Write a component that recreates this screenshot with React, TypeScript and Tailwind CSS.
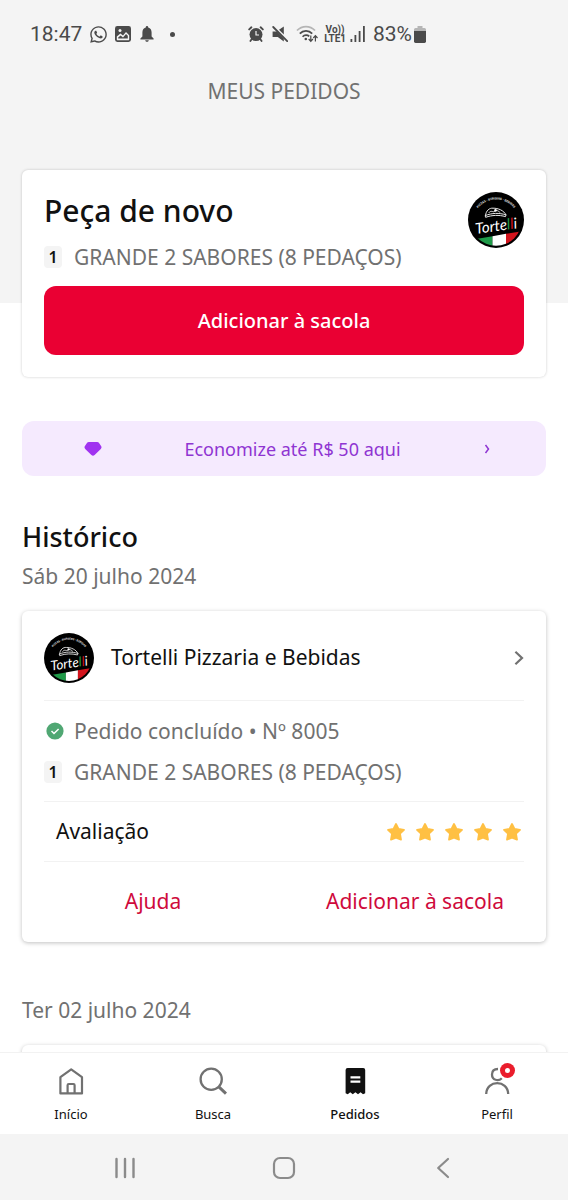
import React from "react";
import { FaWhatsapp } from "react-icons/fa";

function StoreLogo({ className, id }: { className: string; id: string }) {
  return (
    <svg viewBox="0 0 56 56" className={className} role="img" aria-label="Tortelli">
      <defs>
        <clipPath id={`${id}-clip`}>
          <circle cx="28" cy="28" r="25.8" />
        </clipPath>
        <path id={`${id}-arc`} d="M7.5 20 A 23 23 0 0 1 48.5 20" />
      </defs>
      <circle cx="28" cy="28" r="28" fill="#000" />
      <g clipPath={`url(#${id}-clip)`}>
        <path d="M0 48.4 L24.5 44.2 V56 H0 Z" fill="#1f9a48" />
        <path d="M24.5 44.2 L38 41.8 V56 H24.5 Z" fill="#fff" />
        <path d="M38 41.8 L56 38.8 V56 H38 Z" fill="#d3141d" />
      </g>
      <text fill="#e0e0e0" fontSize="3" fontWeight="700" fontFamily="Roboto, sans-serif" textAnchor="middle">
        <textPath href={`#${id}-arc`} startOffset="50%">
          PIZZAS - BURGERS - BEBIDAS
        </textPath>
      </text>
      <path
        d="M17.5 23.5 C18 18.5 21.5 15.8 25 16.2 C30 16 36 18.5 38 22.8 M17.5 23.5 C24 20.8 31 20.8 38 22.8 L37.5 24.6 C31 22.8 24 23 18 25.2 Z M21 20.5 C23 17.8 25 20.5 26.5 19.5 C28 17 31 19.5 32 20.4"
        fill="none"
        stroke="#e6e6e6"
        strokeWidth="1"
        strokeLinecap="round"
        strokeLinejoin="round"
      />
      <circle cx="27.5" cy="18.4" r="1.3" fill="#fff" />
      <text
        x="8"
        y="42"
        transform="rotate(-8 8 42)"
        fontFamily="Lato, sans-serif"
        fontStyle="italic"
        fontSize="15"
        fill="#fff"
      >
        Torte<tspan fill="#1f9a48">l</tspan><tspan fill="#d3141d">l</tspan>i
      </text>
    </svg>
  );
}

function AlarmIcon() {
  return (
    <svg viewBox="0 0 16 16" className="size-4" aria-hidden="true">
      <circle cx="8" cy="8.6" r="6.5" fill="#4a4a4a" />
      <path d="M1.2 3.4 L3.4 1.3 M14.8 3.4 L12.6 1.3" stroke="#4a4a4a" strokeWidth="1.9" strokeLinecap="round" />
      <path d="M3.8 13 L2.4 15 M12.2 13 L13.6 15" stroke="#4a4a4a" strokeWidth="1.8" strokeLinecap="round" />
      <path d="M8 5 V9 H11" stroke="#f4f4f4" strokeWidth="1.2" fill="none" />
    </svg>
  );
}

function MuteIcon() {
  return (
    <svg viewBox="0 0 16 16" className="size-4" aria-hidden="true">
      <path d="M.6 5.4 H5 L11.8 12.4 V15.4 L5.8 11 H.6 Z" fill="#4a4a4a" />
      <path d="M7 3.8 L11.8 .4 V8.4 Z" fill="#4a4a4a" />
      <path d="M1.2 1 L15.2 15.2" stroke="#4a4a4a" strokeWidth="1.8" strokeLinecap="round" />
    </svg>
  );
}

function WifiIcon() {
  return (
    <svg viewBox="0 0 22 18" className="h-[18px] w-[22px]" fill="none" aria-hidden="true">
      <path d="M1 5.5 C6 .2 14 .2 19 5.5" stroke="#b5b5b5" strokeWidth="1.8" />
      <path d="M3.8 8.7 C7.2 5 12.8 5 16.2 8.7" stroke="#4a4a4a" strokeWidth="1.7" />
      <path d="M6.6 11.8 C8.5 9.7 11.5 9.7 13.2 11.4" stroke="#4a4a4a" strokeWidth="1.7" />
      <circle cx="9.8" cy="14" r="1.3" fill="#4a4a4a" />
      <path d="M14.8 10.5 V16 M12.7 14 L14.8 16.4 L16.9 14 M19.4 16.5 V11 M17.3 13 L19.4 10.6 L21.5 13" stroke="#4a4a4a" strokeWidth="1.2" />
    </svg>
  );
}

function StatusBar() {
  return (
    <div className="flex h-[69px] items-center justify-between pl-[30px] pr-[142px] font-[Roboto,sans-serif] text-xl text-[#4a4a4a]">
      <div className="flex items-center">
        <span className="text-[21px]">18:47</span>
        <FaWhatsapp className="ml-[7px] size-[19px]" aria-hidden="true" />
        <svg viewBox="0 0 16 16" className="ml-[7px] size-4" aria-hidden="true">
          <rect width="16" height="16" rx="2.4" fill="#4a4a4a" />
          <path d="M1.8 13.6 V10.6 L5.4 7.4 L8 9.6 L11 6 L14.2 9.2 V13.6 Q14.2 14.2 13.6 14.2 H2.4 Q1.8 14.2 1.8 13.6 Z" fill="#f4f4f4" />
          <path d="M3.2 12.4 V11.4 L5.6 9.4 L8 11.4 L11 8 L12.8 9.8 V12.4 Z" fill="#4a4a4a" />
          <circle cx="5" cy="4.4" r="1.5" fill="#f4f4f4" />
        </svg>
        <svg viewBox="0 0 14 16" className="ml-[9px] h-4 w-3.5" fill="#4a4a4a" aria-hidden="true">
          <path d="M7 0 C7.8 0 8.2 .6 8.2 1.4 C10.6 2 11.6 4 11.6 6.4 V10.4 L13.6 12.4 V13.4 H.4 V12.4 L2.4 10.4 V6.4 C2.4 4 3.4 2 5.8 1.4 C5.8 .6 6.2 0 7 0 Z M5.2 14.2 H8.8 C8.4 16.2 5.6 16.2 5.2 14.2 Z" />
        </svg>
        <span className="ml-4 size-[5px] rounded-full bg-[#4a4a4a]" />
      </div>
      <div className="flex items-center">
        <AlarmIcon />
        <span className="ml-2 flex">
          <MuteIcon />
        </span>
        <span className="ml-2 flex">
          <WifiIcon />
        </span>
        <span className="ml-1.5 flex flex-col items-center text-[10px] font-bold leading-[9px]">
          <span>Vo))</span>
          <span>LTE1</span>
        </span>
        <svg viewBox="0 0 16 16" className="ml-1 size-4" fill="#4a4a4a" aria-hidden="true">
          <path d="M.5 13 H2.3 V16 H.5 Z M4.5 9 H6.3 V16 H4.5 Z M8.7 5 H10.5 V16 H8.7 Z M13 0 H14.8 V16 H13 Z" />
        </svg>
        <span className="ml-[7px] text-[21px]">83%</span>
        <svg viewBox="0 0 12 17" className="ml-0.5 h-[17px] w-3" aria-hidden="true">
          <path d="M3.5 0 H8.5 V2 H10.5 Q12 2 12 3.5 V6 H0 V3.5 Q0 2 1.5 2 H3.5 Z" fill="#b5b5b5" />
          <path d="M0 5 H12 V15.2 Q12 17 10.5 17 H1.5 Q0 17 0 15.2 Z" fill="#4a4a4a" />
        </svg>
      </div>
    </div>
  );
}

function OrderItem() {
  return (
    <p className="flex items-center gap-3 text-[21px] leading-7 text-[#717171]">
      <span className="flex h-[22px] w-[18px] items-center justify-center rounded bg-[#f4f4f4] text-base font-semibold text-[#111]">
        1
      </span>
      GRANDE 2 SABORES (8 PEDAÇOS)
    </p>
  );
}

function Star() {
  return (
    <svg viewBox="0 0 20 20" className="size-5" aria-hidden="true">
      <path
        d="M10 2 L12.5 7 L18 7.8 L14 11.7 L15 17.6 L10 15.6 L5 17.6 L6 11.7 L2 7.8 L7.5 7 Z"
        fill="#ffc043"
        stroke="#ffc043"
        strokeWidth="1.8"
        strokeLinejoin="round"
      />
    </svg>
  );
}

const tabs = [
  {
    label: "Início",
    icon: (
      <svg viewBox="0 0 28 28" className="size-7" fill="none" stroke="#717171" strokeWidth="2.2" strokeLinejoin="round" aria-hidden="true">
        <path d="M3.4 10.2 L14.2 2.4 L25 10.2 V26.4 H3.4 Z M10.6 26 V18.2 Q10.6 17 11.8 17 H16.4 Q17.6 17 17.6 18.2 V26" />
      </svg>
    ),
  },
  {
    label: "Busca",
    icon: (
      <svg viewBox="0 0 28 28" className="size-7" fill="none" stroke="#717171" strokeWidth="2.3" aria-hidden="true">
        <circle cx="12.2" cy="12.2" r="10.6" />
        <path d="M19.6 19.6 L27 26.6" strokeWidth="3" />
      </svg>
    ),
  },
  {
    label: "Pedidos",
    active: true,
    icon: (
      <svg viewBox="0 0 28 28" className="size-7" aria-hidden="true">
        <path d="M6.6 1 H22.2 Q24.2 1 24.2 3 V26.2 L22 27.3 L19.6 25.3 L17 27.3 L14.4 25.3 L11.8 27.3 L9.2 25.3 L6.8 27.3 L4.6 26.2 V3 Q4.6 1 6.6 1 Z" fill="#111" />
        <path d="M9.5 10.3 H19.3 M9.5 14.6 H19.3" stroke="#fff" strokeWidth="2.2" />
      </svg>
    ),
  },
  {
    label: "Perfil",
    badge: true,
    icon: (
      <svg viewBox="0 0 28 28" className="size-7" fill="none" stroke="#717171" strokeWidth="2.3" aria-hidden="true">
        <path d="M15 2 C10.5 2 9 4.5 9 7.4 C9 13.2 15.4 14.6 18.8 11.2 M3.2 27 C3.6 12.6 24.8 12.6 25.2 27" />
      </svg>
    ),
  },
];

export default function App() {
  return (
    <div className="flex h-screen flex-col bg-white font-['Noto_Sans',sans-serif] text-[#111]">
      <div className="min-h-0 flex-1 overflow-y-auto [scrollbar-width:none]">
        <header className="h-[303px] bg-[#f4f4f4]">
          <StatusBar />
          <h1 className="pt-2 text-center text-[21px] leading-7 text-[#717171]">MEUS PEDIDOS</h1>
        </header>

        <main className="-mt-[133px] px-[22px]">
          <section className="rounded-md bg-white p-[22px] shadow-[0_0_3px_rgba(0,0,0,0.2)]">
            <div className="flex items-start justify-between">
              <div>
                <h2 className="text-[30px] font-medium leading-[38px]">Peça de novo</h2>
                <div className="mt-[13px]">
                  <OrderItem />
                </div>
              </div>
              <StoreLogo id="again" className="size-14" />
            </div>
            <button type="button" className="mt-[15px] h-[69px] w-full rounded-xl bg-[#ea0033] text-xl font-medium text-white">
              Adicionar à sacola
            </button>
          </section>

          <a href="#economize" className="mt-11 flex h-[55px] items-center justify-between rounded-xl bg-[#f5eafe] pl-[62px] pr-[55px] text-lg text-[#8f35d2]">
            <svg viewBox="0 0 18 14" className="h-3.5 w-[18px]" aria-hidden="true">
              <path d="M5 0 H13 Q14.5 0 15.4 1.4 L17.2 4.2 Q18 5.6 16.8 7 L10.6 13 Q9 14.4 7.4 13 L1.2 7 Q0 5.6 .8 4.2 L2.6 1.4 Q3.5 0 5 0 Z" fill="#a033f0" />
            </svg>
            Economize até R$ 50 aqui
            <svg viewBox="0 0 8 10" className="h-2.5 w-2" fill="none" stroke="#8f35d2" strokeWidth="1.5" aria-hidden="true">
              <path d="M2.5 1 L5.5 5 L2.5 9" />
            </svg>
          </a>

          <h2 className="mt-[43px] text-[27px] font-medium leading-9">Histórico</h2>
          <p className="mt-[7px] text-[21px] leading-7 text-[#717171]">Sáb 20 julho 2024</p>

          <article className="mt-[21px] rounded-md bg-white px-[22px] shadow-[0_1px_4px_rgba(0,0,0,0.25)]">
            <a href="#tortelli" className="flex h-[90px] items-center border-b border-[#f2f2f2] pt-1">
              <StoreLogo id="history" className="size-[50px]" />
              <h3 className="ml-[17px] flex-1 text-[21px]">Tortelli Pizzaria e Bebidas</h3>
              <svg viewBox="0 0 10 16" className="h-4 w-2.5" fill="none" stroke="#717171" strokeWidth="2.2" aria-hidden="true">
                <path d="M1.4 1.8 L8 8 L1.4 14.2" />
              </svg>
            </a>
            <div className="flex h-[101px] flex-col gap-[13px] border-b border-[#f2f2f2] pt-4">
              <p className="flex items-center text-[21px] leading-7 text-[#717171]">
                <svg viewBox="0 0 18 18" className="ml-0.5 mr-2.5 size-[18px]" aria-hidden="true">
                  <circle cx="9" cy="9" r="8.6" fill="#50a773" />
                  <path d="M5.5 9 L8 11.5 L12.6 7" fill="none" stroke="#fff" strokeWidth="1.5" />
                </svg>
                Pedido concluído • Nº 8005
              </p>
              <OrderItem />
            </div>
            <div className="flex h-[60px] items-center justify-between border-b border-[#f2f2f2] pl-3 pr-0.5">
              <span className="text-[21px]">Avaliação</span>
              <span className="flex gap-[9px]" role="img" aria-label="5 estrelas">
                <Star />
                <Star />
                <Star />
                <Star />
                <Star />
              </span>
            </div>
            <div className="-mx-[22px] grid h-20 grid-cols-2 text-[21px] text-[#cf0a3c]">
              <button type="button">Ajuda</button>
              <button type="button">Adicionar à sacola</button>
            </div>
          </article>

          <p className="mt-[54px] text-[21px] leading-7 text-[#717171]">Ter 02 julho 2024</p>
          <article className="mt-[21px] h-24 rounded-md bg-white shadow-[0_1px_4px_rgba(0,0,0,0.25)]" />
        </main>
      </div>

      <nav className="z-10 grid h-[82px] shrink-0 grid-cols-4 border-t border-[#f2f2f2] bg-white">
        {tabs.map((tab) => (
          <a key={tab.label} href={`#${tab.label}`} className="flex flex-col items-center pt-3.5">
            <span className="relative">
              {tab.icon}
              {tab.badge && (
                <span className="absolute -right-1 -top-1 flex size-[15px] items-center justify-center rounded-full bg-[#ea1d2c]">
                  <span className="size-[5px] rounded-full bg-white" />
                </span>
              )}
            </span>
            <span className={tab.active ? "mt-2.5 text-[13px] font-medium leading-[18px]" : "mt-2.5 text-[13px] leading-[18px]"}>
              {tab.label}
            </span>
          </a>
        ))}
      </nav>

      <div className="grid h-[66px] shrink-0 grid-cols-3 place-items-center bg-[#f4f4f4] px-[46px] pt-0.5">
        <button type="button" aria-label="Recentes">
          <svg viewBox="0 0 22 22" className="size-[22px]" stroke="#8b8b8b" strokeWidth="2.4" strokeLinecap="round" aria-hidden="true">
            <path d="M2.5 2 V20 M11 2 V20 M19.5 2 V20" />
          </svg>
        </button>
        <button type="button" aria-label="Tela inicial">
          <svg viewBox="0 0 24 24" className="size-6" fill="none" stroke="#8b8b8b" strokeWidth="2.2" aria-hidden="true">
            <rect x="2" y="2" width="20" height="20" rx="6" />
          </svg>
        </button>
        <button type="button" aria-label="Voltar">
          <svg viewBox="0 0 16 22" className="h-[22px] w-4" fill="none" stroke="#8b8b8b" strokeWidth="2.2" strokeLinecap="round" strokeLinejoin="round" aria-hidden="true">
            <path d="M13 2 L3.2 11 L13 20" />
          </svg>
        </button>
      </div>
    </div>
  );
}
